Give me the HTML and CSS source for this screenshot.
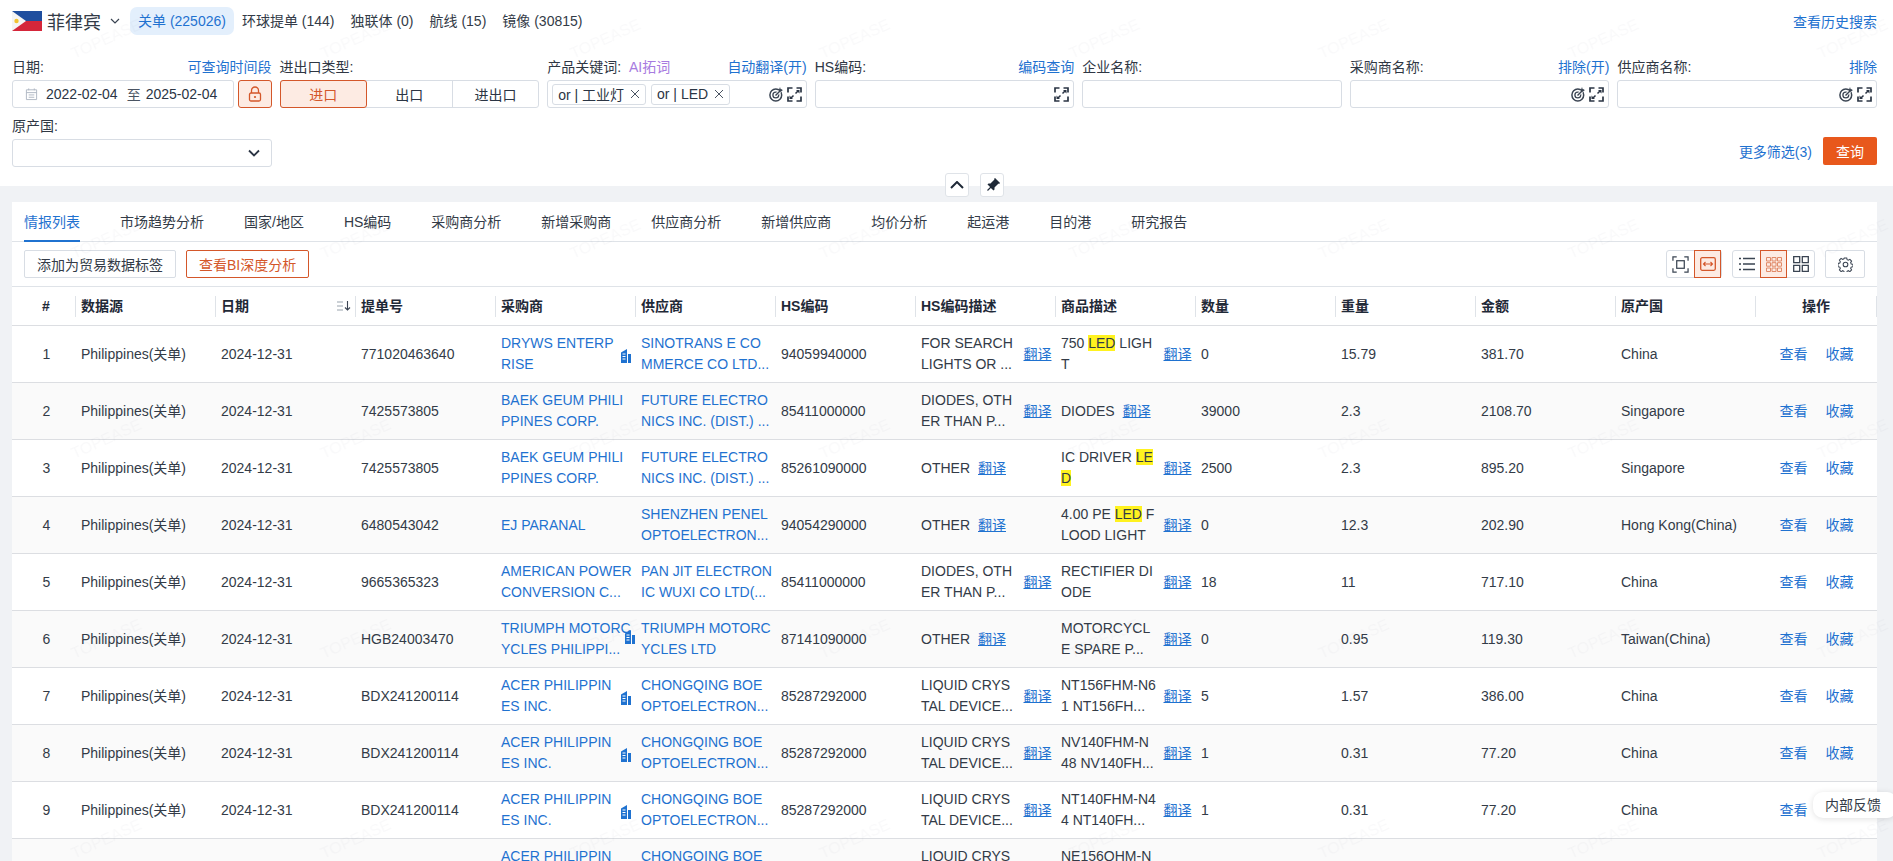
FILE: index.html
```html
<!DOCTYPE html>
<html lang="zh-CN">
<head>
<meta charset="utf-8">
<title>情报列表</title>
<link rel="stylesheet" href="styles.css">
</head>
<body>
<svg width="0" height="0" class="defs">
  <symbol id="i-expand" viewBox="0 0 15 15"><path d="M1 5.500V1h4.500M9.500 1H14v4.500M14 9.500V14H9.500M5.500 14H1V9.500" fill="none" stroke="#2b3544" stroke-width="1.700"/><path d="M8.500 6.500L11.500 3.500M6.500 8.500L3.500 11.500" stroke="#2b3544" stroke-width="1.500"/><path d="M9 3h3.500v3.500zM6 12H2.500V8.500z" fill="#2b3544"/></symbol>
  <symbol id="i-target" viewBox="0 0 15 15"><circle cx="6.800" cy="8" r="5.900" fill="none" stroke="#3a4452" stroke-width="1.500"/><circle cx="6.800" cy="8" r="2.900" fill="none" stroke="#3a4452" stroke-width="1.300"/><path d="M6.500 8.500L12.500 2.500" stroke="#fff" stroke-width="3"/><path d="M6.500 8.500L12.500 2.500" stroke="#3a4452" stroke-width="1.400"/><path d="M11 0l.7 2.300 2.300.7-2.300 1.700-2.200-.7z" fill="#3a4452"/></symbol>
  <symbol id="i-building" viewBox="0 0 10 14"><path d="M0 3.500L6 0v14H0z" fill="#1f72d0"/><path d="M7 5h3v9H7z" fill="#1f72d0"/><path d="M1.500 5h3M1.500 7.500h3M1.500 10h3" stroke="#fff" stroke-width="1"/></symbol>
  <symbol id="i-close" viewBox="0 0 10 10"><path d="M1 1l8 8M9 1l-8 8" stroke="#4a5462" stroke-width="1"/></symbol>
</svg>

<div class="page">
  <section class="search">
    <div class="topbar">
      <svg class="flag" viewBox="0 0 30 20"><rect width="30" height="10" fill="#1f4e9e"/><rect y="10" width="30" height="10" fill="#d5263a"/><path d="M0 0l14 10L0 20z" fill="#f4f4f4"/><circle cx="4.500" cy="10" r="2.200" fill="#f2c230"/></svg>
      <span class="country">菲律宾</span>
      <svg class="caret" viewBox="0 0 10 6"><path d="M1 1l4 4 4-4" fill="none" stroke="#3a4452" stroke-width="1.200"/></svg>
      <nav class="sources">
        <a class="source is-on">关单 (225026)</a>
        <a class="source">环球提单 (144)</a>
        <a class="source">独联体 (0)</a>
        <a class="source">航线 (15)</a>
        <a class="source">镜像 (30815)</a>
      </nav>
      <a class="link history">查看历史搜索</a>
    </div>

    <div class="filters">
      <div class="field">
        <div class="label"><span>日期:</span><a class="link">可查询时间段</a></div>
        <div class="date-row">
          <div class="box date">
            <svg class="cal" viewBox="0 0 14 14"><path d="M1.500 2.500h11v10.500h-11zM1.500 5.500h11M4 1v2M10 1v2M4 8h6M4 10.500h6" fill="none" stroke="#aeb6c1" stroke-width="1"/></svg>
            <span>2022-02-04</span><span class="to">至</span><span>2025-02-04</span>
          </div>
          <button class="lock"><svg viewBox="0 0 14 16" width="14" height="16"><path d="M3.500 7V4.500a3.500 3.500 0 0 1 7 0V7" fill="none" stroke="#d4572a" stroke-width="1.300"/><rect x="1.500" y="7" width="11" height="8" rx="1.500" fill="none" stroke="#d4572a" stroke-width="1.300"/><circle cx="7" cy="11" r="1.100" fill="#d4572a"/></svg></button>
        </div>
      </div>
      <div class="field">
        <div class="label"><span>进出口类型:</span></div>
        <div class="seg">
          <span class="seg-item is-on">进口</span><span class="seg-item">出口</span><span class="seg-item">进出口</span>
        </div>
      </div>
      <div class="field">
        <div class="label"><span>产品关键词: <a class="ai">AI拓词</a></span><a class="link">自动翻译(开)</a></div>
        <div class="box tags">
          <span class="tag">or | 工业灯<svg class="x"><use href="#i-close"/></svg></span>
          <span class="tag">or | LED<svg class="x"><use href="#i-close"/></svg></span>
          <span class="tools"><svg class="ico"><use href="#i-target"/></svg><svg class="ico"><use href="#i-expand"/></svg></span>
        </div>
      </div>
      <div class="field">
        <div class="label"><span>HS编码:</span><a class="link">编码查询</a></div>
        <div class="box"><span class="tools"><svg class="ico"><use href="#i-expand"/></svg></span></div>
      </div>
      <div class="field">
        <div class="label"><span>企业名称:</span></div>
        <div class="box"></div>
      </div>
      <div class="field">
        <div class="label"><span>采购商名称:</span><a class="link">排除(开)</a></div>
        <div class="box"><span class="tools"><svg class="ico"><use href="#i-target"/></svg><svg class="ico"><use href="#i-expand"/></svg></span></div>
      </div>
      <div class="field">
        <div class="label"><span>供应商名称:</span><a class="link">排除</a></div>
        <div class="box"><span class="tools"><svg class="ico"><use href="#i-target"/></svg><svg class="ico"><use href="#i-expand"/></svg></span></div>
      </div>
      <div class="field">
        <div class="label"><span>原产国:</span></div>
        <div class="box"><span class="tools"><svg class="chev" viewBox="0 0 12 8"><path d="M1 1.500l5 5 5-5" fill="none" stroke="#2b3544" stroke-width="1.800"/></svg></span></div>
      </div>
      <div class="actions">
        <a class="link">更多筛选(3)</a>
        <button class="query">查询</button>
      </div>
    </div>
  </section>

  <div class="float-btn float-up"><svg viewBox="0 0 14 8" width="14" height="8"><path d="M1 7l6-6 6 6" fill="none" stroke="#1f2937" stroke-width="2"/></svg></div>
  <div class="float-btn float-pin"><svg viewBox="0 0 24 24" width="17" height="17"><path transform="rotate(45 12 12)" d="M16 12V4h1V2H7v2h1v8l-2 2v2h5.200v6h1.600v-6H18v-2z" fill="#1f2937"/></svg></div>

  <main class="card">
    <nav class="tabs">
      <a class="tab is-on">情报列表</a><a class="tab">市场趋势分析</a><a class="tab">国家/地区</a><a class="tab">HS编码</a><a class="tab">采购商分析</a><a class="tab">新增采购商</a><a class="tab">供应商分析</a><a class="tab">新增供应商</a><a class="tab">均价分析</a><a class="tab">起运港</a><a class="tab">目的港</a><a class="tab">研究报告</a>
    </nav>
    <div class="toolbar">
      <button class="btn">添加为贸易数据标签</button>
      <button class="btn btn-accent">查看BI深度分析</button>
      <div class="views">
        <div class="group">
          <span class="vbtn"><svg viewBox="0 0 18 18" width="17" height="17"><path d="M1 5V1h4M13 1h4v4M17 13v4h-4M5 17H1v-4" fill="none" stroke="#3a4452" stroke-width="1.300"/><rect x="5" y="5" width="8" height="8" fill="none" stroke="#3a4452" stroke-width="1.300"/></svg></span>
          <span class="vbtn is-on"><svg viewBox="0 0 16 14" width="16" height="14"><rect x=".7" y=".7" width="14.600" height="12.600" rx="1.500" fill="none" stroke="#d4572a" stroke-width="1.300"/><path d="M3.500 7h9M5.500 5L3.500 7l2 2M10.500 5l2 2-2 2" fill="none" stroke="#d4572a" stroke-width="1.100"/></svg></span>
        </div>
        <div class="group">
          <span class="vbtn"><svg viewBox="0 0 16 14" width="16" height="14"><path d="M0 1.500h2M4 1.500h12M0 7h2M4 7h12M0 12.500h2M4 12.500h12" stroke="#3a4452" stroke-width="1.300"/></svg></span>
          <span class="vbtn is-on"><svg viewBox="0 0 16 15" width="16" height="15"><path d="M.5.5h4v3.500h-4zM6 .5h4v3.500H6zM11.500.5h4v3.500h-4zM.5 5.700h4v3.500h-4zM6 5.700h4v3.500H6zM11.500 5.700h4v3.500h-4zM.5 11h4v3.500h-4zM6 11h4v3.500H6zM11.500 11h4v3.500h-4z" fill="none" stroke="#e08a68" stroke-width="1"/></svg></span>
          <span class="vbtn"><svg viewBox="0 0 16 16" width="16" height="16"><path d="M.7.7h6v6h-6zM9.300.7h6v6h-6zM.7 9.300h6v6h-6zM9.300 9.300h6v6h-6z" fill="none" stroke="#3a4452" stroke-width="1.300"/></svg></span>
        </div>
        <span class="vbtn gear"><svg viewBox="0 0 16 16" width="15" height="15"><path d="M6.700 1h2.600l.4 1.900 1.300.6 1.700-1 1.800 1.900-1 1.600.6 1.400 1.900.4v2.500l-1.900.5-.6 1.300 1 1.700-1.800 1.800-1.700-1-1.300.6-.4 1.800H6.700l-.4-1.800-1.300-.6-1.700 1-1.800-1.800 1-1.700-.6-1.300-1.900-.5V6.800l1.900-.4.600-1.400-1-1.600 1.800-1.900 1.700 1 1.300-.6z" fill="none" stroke="#3a4452" stroke-width="1.100"/><circle cx="8" cy="8" r="2.500" fill="none" stroke="#3a4452" stroke-width="1.100"/></svg></span>
      </div>
    </div>

    <table class="grid">
      <colgroup>
        <col class="c-num"><col class="c-w"><col class="c-w"><col class="c-w"><col class="c-w"><col class="c-w"><col class="c-w"><col class="c-w"><col class="c-w"><col class="c-w"><col class="c-w"><col class="c-w"><col class="c-w"><col class="c-op">
      </colgroup>
      <thead>
        <tr>
          <th><div class="th th-num">#</div></th>
          <th><div class="th">数据源</div></th>
          <th><div class="th th-sort">日期<svg class="sort" viewBox="0 0 14 10" width="14" height="10"><path d="M0 1h6M0 5h6M0 9h6" stroke="#9aa3ae" stroke-width="1.200"/><path d="M10.500 0v9M8 6.500l2.500 2.500L13 6.500" fill="none" stroke="#3a4452" stroke-width="1.100"/></svg></div></th>
          <th><div class="th">提单号</div></th>
          <th><div class="th">采购商</div></th>
          <th><div class="th">供应商</div></th>
          <th><div class="th">HS编码</div></th>
          <th><div class="th">HS编码描述</div></th>
          <th><div class="th">商品描述</div></th>
          <th><div class="th">数量</div></th>
          <th><div class="th">重量</div></th>
          <th><div class="th">金额</div></th>
          <th><div class="th">原产国</div></th>
          <th><div class="th th-c">操作</div></th>
        </tr>
      </thead>
      <tbody>
        <tr>
          <td class="num">1</td><td>Philippines(关单)</td><td>2024-12-31</td><td>771020463640</td>
          <td><div class="co"><a class="co-t">DRYWS ENTERP<br>RISE</a><svg class="bld"><use href="#i-building"/></svg></div></td>
          <td><a class="cl">SINOTRANS E CO<br>MMERCE CO LTD...</a></td>
          <td>94059940000</td>
          <td><div class="tr"><span class="fix">FOR SEARCH<br>LIGHTS OR ...</span><a class="tl">翻译</a></div></td>
          <td><div class="tr"><span class="fix">750 <mark>LED</mark> LIGH<br>T</span><a class="tl">翻译</a></div></td>
          <td>0</td><td>15.79</td><td>381.70</td><td>China</td>
          <td class="ops"><a>查看</a><a>收藏</a></td>
        </tr>
        <tr>
          <td class="num">2</td><td>Philippines(关单)</td><td>2024-12-31</td><td>7425573805</td>
          <td><a class="cl">BAEK GEUM PHILI<br>PPINES CORP.</a></td>
          <td><a class="cl">FUTURE ELECTRO<br>NICS INC. (DIST.) ...</a></td>
          <td>85411000000</td>
          <td><div class="tr"><span class="fix">DIODES, OTH<br>ER THAN P...</span><a class="tl">翻译</a></div></td>
          <td><div class="tr"><span>DIODES</span><a class="tl">翻译</a></div></td>
          <td>39000</td><td>2.3</td><td>2108.70</td><td>Singapore</td>
          <td class="ops"><a>查看</a><a>收藏</a></td>
        </tr>
        <tr>
          <td class="num">3</td><td>Philippines(关单)</td><td>2024-12-31</td><td>7425573805</td>
          <td><a class="cl">BAEK GEUM PHILI<br>PPINES CORP.</a></td>
          <td><a class="cl">FUTURE ELECTRO<br>NICS INC. (DIST.) ...</a></td>
          <td>85261090000</td>
          <td><div class="tr"><span>OTHER</span><a class="tl">翻译</a></div></td>
          <td><div class="tr"><span class="fix">IC DRIVER <mark>LE<br>D</mark></span><a class="tl">翻译</a></div></td>
          <td>2500</td><td>2.3</td><td>895.20</td><td>Singapore</td>
          <td class="ops"><a>查看</a><a>收藏</a></td>
        </tr>
        <tr>
          <td class="num">4</td><td>Philippines(关单)</td><td>2024-12-31</td><td>6480543042</td>
          <td><a class="cl">EJ PARANAL</a></td>
          <td><a class="cl">SHENZHEN PENEL<br>OPTOELECTRON...</a></td>
          <td>94054290000</td>
          <td><div class="tr"><span>OTHER</span><a class="tl">翻译</a></div></td>
          <td><div class="tr"><span class="fix">4.00 PE <mark>LED</mark> F<br>LOOD LIGHT</span><a class="tl">翻译</a></div></td>
          <td>0</td><td>12.3</td><td>202.90</td><td>Hong Kong(China)</td>
          <td class="ops"><a>查看</a><a>收藏</a></td>
        </tr>
        <tr>
          <td class="num">5</td><td>Philippines(关单)</td><td>2024-12-31</td><td>9665365323</td>
          <td><a class="cl">AMERICAN POWER<br>CONVERSION C...</a></td>
          <td><a class="cl">PAN JIT ELECTRON<br>IC WUXI CO LTD(...</a></td>
          <td>85411000000</td>
          <td><div class="tr"><span class="fix">DIODES, OTH<br>ER THAN P...</span><a class="tl">翻译</a></div></td>
          <td><div class="tr"><span class="fix">RECTIFIER DI<br>ODE</span><a class="tl">翻译</a></div></td>
          <td>18</td><td>11</td><td>717.10</td><td>China</td>
          <td class="ops"><a>查看</a><a>收藏</a></td>
        </tr>
        <tr>
          <td class="num">6</td><td>Philippines(关单)</td><td>2024-12-31</td><td>HGB24003470</td>
          <td><div class="co co-wide"><a class="co-t">TRIUMPH MOTORC<br>YCLES PHILIPPI...</a><svg class="bld"><use href="#i-building"/></svg></div></td>
          <td><a class="cl">TRIUMPH MOTORC<br>YCLES LTD</a></td>
          <td>87141090000</td>
          <td><div class="tr"><span>OTHER</span><a class="tl">翻译</a></div></td>
          <td><div class="tr"><span class="fix">MOTORCYCL<br>E SPARE P...</span><a class="tl">翻译</a></div></td>
          <td>0</td><td>0.95</td><td>119.30</td><td>Taiwan(China)</td>
          <td class="ops"><a>查看</a><a>收藏</a></td>
        </tr>
        <tr>
          <td class="num">7</td><td>Philippines(关单)</td><td>2024-12-31</td><td>BDX241200114</td>
          <td><div class="co"><a class="co-t">ACER PHILIPPIN<br>ES INC.</a><svg class="bld"><use href="#i-building"/></svg></div></td>
          <td><a class="cl">CHONGQING BOE<br>OPTOELECTRON...</a></td>
          <td>85287292000</td>
          <td><div class="tr"><span class="fix">LIQUID CRYS<br>TAL DEVICE...</span><a class="tl">翻译</a></div></td>
          <td><div class="tr"><span class="fix">NT156FHM-N6<br>1 NT156FH...</span><a class="tl">翻译</a></div></td>
          <td>5</td><td>1.57</td><td>386.00</td><td>China</td>
          <td class="ops"><a>查看</a><a>收藏</a></td>
        </tr>
        <tr>
          <td class="num">8</td><td>Philippines(关单)</td><td>2024-12-31</td><td>BDX241200114</td>
          <td><div class="co"><a class="co-t">ACER PHILIPPIN<br>ES INC.</a><svg class="bld"><use href="#i-building"/></svg></div></td>
          <td><a class="cl">CHONGQING BOE<br>OPTOELECTRON...</a></td>
          <td>85287292000</td>
          <td><div class="tr"><span class="fix">LIQUID CRYS<br>TAL DEVICE...</span><a class="tl">翻译</a></div></td>
          <td><div class="tr"><span class="fix">NV140FHM-N<br>48 NV140FH...</span><a class="tl">翻译</a></div></td>
          <td>1</td><td>0.31</td><td>77.20</td><td>China</td>
          <td class="ops"><a>查看</a><a>收藏</a></td>
        </tr>
        <tr>
          <td class="num">9</td><td>Philippines(关单)</td><td>2024-12-31</td><td>BDX241200114</td>
          <td><div class="co"><a class="co-t">ACER PHILIPPIN<br>ES INC.</a><svg class="bld"><use href="#i-building"/></svg></div></td>
          <td><a class="cl">CHONGQING BOE<br>OPTOELECTRON...</a></td>
          <td>85287292000</td>
          <td><div class="tr"><span class="fix">LIQUID CRYS<br>TAL DEVICE...</span><a class="tl">翻译</a></div></td>
          <td><div class="tr"><span class="fix">NT140FHM-N4<br>4 NT140FH...</span><a class="tl">翻译</a></div></td>
          <td>1</td><td>0.31</td><td>77.20</td><td>China</td>
          <td class="ops"><a>查看</a><a>收藏</a></td>
        </tr>
        <tr>
          <td class="num"></td><td></td><td></td><td></td>
          <td><a class="cl">ACER PHILIPPIN<br>ES INC.</a></td>
          <td><a class="cl">CHONGQING BOE<br>OPTOELECTRON...</a></td>
          <td></td>
          <td><div class="tr"><span class="fix">LIQUID CRYS<br>TAL DEVICE...</span></div></td>
          <td><div class="tr"><span class="fix">NE156QHM-N<br>1 NE156QH...</span></div></td>
          <td></td><td></td><td></td><td></td>
          <td class="ops"></td>
        </tr>
      </tbody>
    </table>
  </main>

  <div class="feedback">内部反馈</div>

  <svg class="watermark" aria-hidden="true">
    <defs>
      <pattern id="wm" width="249.500" height="200" patternUnits="userSpaceOnUse">
        <text x="74" y="59" transform="rotate(-24 74 59)">TOPEASE</text>
      </pattern>
    </defs>
    <rect width="100%" height="100%" fill="url(#wm)"/>
  </svg>
</div>
</body>
</html>
```

FILE: styles.css
```css
* { box-sizing: border-box; }
html, body { margin: 0; height: 100%; overflow: hidden; }
body {
  font-family: "Liberation Sans", "Noto Sans CJK SC", sans-serif;
  font-size: 14px;
  color: #333b47;
  background: #f0f2f5;
}
a { color: inherit; text-decoration: none; }
button { font: inherit; cursor: pointer; }
.defs { position: absolute; }
.page { position: relative; height: 861px; overflow: hidden; }
.link { color: #1f72d0; }

/* search panel */
.search { background: #fff; height: 186px; padding: 7px 16px 0 12px; }
.topbar { display: flex; align-items: center; height: 28px; }
.flag { width: 30px; height: 20px; flex: none; }
.country { font-size: 18px; margin-left: 5px; color: #333b47; }
.caret { width: 10px; height: 6px; margin: 0 10px 0 9px; flex: none; }
.sources { display: flex; align-items: center; }
.source { height: 28px; line-height: 28px; padding: 0 8px; white-space: nowrap; }
.source.is-on { background: #e3effc; color: #1f72d0; border-radius: 7px; }
.history { margin-left: auto; }

.filters {
  display: grid;
  grid-template-columns: repeat(7, 1fr);
  column-gap: 8px;
  row-gap: 9px;
  margin-top: 23px;
}
.field { min-width: 0; }
.label { display: flex; justify-content: space-between; height: 18px; line-height: 18px; margin-bottom: 4px; white-space: nowrap; color: #2f3744; }
.ai { color: #a77be0; margin-left: 4px; }
.box {
  display: flex; align-items: center;
  height: 28px; border: 1px solid #d8dde4; border-radius: 3px;
  background: #fff; padding: 0 4px;
}
.date-row { display: flex; gap: 4px; }
.date { flex: 1; padding-left: 12px; color: #2b3544; white-space: nowrap; }
.cal { width: 13px; height: 14px; margin-right: 8px; flex: none; }
.to { color: #4a5462; margin: 0 5px 0 9px; }
.lock {
  width: 34px; height: 28px; padding: 0; flex: none;
  display: flex; align-items: center; justify-content: center;
  background: #fdebe3; border: 1px solid #d4572a; border-radius: 3px;
}
.seg { display: flex; height: 28px; border: 1px solid #d8dde4; border-radius: 3px; }
.seg-item { flex: 1; display: flex; align-items: center; justify-content: center; color: #2b3544; }
.seg-item + .seg-item + .seg-item { border-left: 1px solid #d8dde4; }
.seg-item.is-on { background: #fdebe3; color: #d4572a; margin: -1px 0 -1px -1px; border: 1px solid #d4572a; border-radius: 3px; }
.tags { gap: 5px; }
.tag {
  display: inline-flex; align-items: center; height: 21px; padding: 0 5px;
  border: 1px solid #d8dde4; border-radius: 3px; white-space: nowrap; color: #2b3544;
}
.x { width: 10px; height: 10px; margin-left: 6px; flex: none; }
.tools { margin-left: auto; display: flex; align-items: center; gap: 3px; }
.ico { width: 15px; height: 15px; display: block; }
.chev { width: 12px; height: 8px; margin-right: 7px; display: block; }
.actions { grid-column: 2 / -1; display: flex; justify-content: flex-end; align-items: center; gap: 11px; align-self: end; margin-bottom: 2px; }
.query { width: 54px; height: 28px; background: #e8581c; color: #fff; border: 0; border-radius: 2px; padding: 0; }

.float-btn {
  position: absolute; top: 173px; width: 24px; height: 24px;
  display: flex; align-items: center; justify-content: center;
  background: #fff; border: 1px solid #dfe3e8; border-radius: 3px;
}
.float-up { left: 945px; }
.float-pin { left: 980px; }

/* result card */
.card { background: #fff; margin: 16px 16px 0 12px; height: 700px; }
.tabs { display: flex; gap: 40px; height: 40px; padding: 0 12px; border-bottom: 1px solid #dfe3e8; }
.tab { height: 40px; line-height: 40px; color: #333b47; white-space: nowrap; }
.tab.is-on { color: #1f72d0; border-bottom: 2px solid #1f72d0; }
.toolbar { display: flex; align-items: center; gap: 10px; height: 45px; padding: 0 12px; border-bottom: 1px solid #dfe3e8; }
.btn {
  height: 28px; padding: 0 12px; background: #fff; color: #333b47;
  border: 1px solid #d8dde4; border-radius: 2px; white-space: nowrap;
}
.btn-accent { color: #d4572a; border-color: #d4572a; }
.views { margin-left: auto; display: flex; gap: 10px; }
.group { display: flex; border: 1px solid #d8dde4; border-radius: 3px; height: 28px; }
.vbtn { width: 27px; display: flex; align-items: center; justify-content: center; }
.vbtn.is-on { background: #fdebe3; outline: 1px solid #d4572a; outline-offset: -1px; margin: -1px 0; }
.gear { width: 40px; height: 28px; border: 1px solid #d8dde4; border-radius: 2px; }

.grid { width: 1865px; border-collapse: separate; border-spacing: 0; table-layout: fixed; }
.c-num { width: 64px; }
.c-w { width: 140px; }
.c-op { width: 121px; }
th { height: 39px; padding: 0; text-align: left; border-bottom: 1px solid #dcdee2; }
.th {
  height: 21px; line-height: 21px; padding-left: 5px;
  border-right: 1px solid #dfe3e8; color: #1f2937; font-weight: 700;
}
.th-c { text-align: center; padding-left: 0; }
.th-num { text-align: center; padding-left: 5px; }
.th-sort { display: flex; justify-content: space-between; align-items: center; padding-right: 4px; }
td {
  height: 57px; padding: 0 0 0 5px; border-bottom: 1px solid #dcdee2;
  line-height: 21px; color: #333b47; white-space: nowrap; overflow: hidden;
}
tbody tr:nth-child(even) td { background: #fafafa; }
.num { text-align: center; }
.cl { display: block; color: #1f72d0; }
.co { display: flex; align-items: center; }
.co-t { width: 119px; flex: none; color: #1f72d0; }
.co-wide .co-t { width: 123px; }
.bld { width: 10px; height: 14px; margin-left: 1px; flex: none; margin-top: 3px; }
.co-wide .bld { margin-top: -4px; }
.tr { display: flex; align-items: center; gap: 8px; }
.fix { width: 94.500px; flex: none; }
.tl { color: #1f72d0; text-decoration: underline; flex: none; }
mark { background: #fff21f; color: inherit; }
.ops { padding: 0; text-align: center; color: #1f72d0; }
.ops a { margin: 0 9px; }

.feedback {
  position: absolute; left: 1813px; top: 792px; width: 84px; height: 26px;
  line-height: 26px; padding-left: 12px; background: #fff; border-radius: 10px;
  box-shadow: 0 1px 6px rgba(0, 0, 0, .12); color: #333b47;
}
.watermark { position: absolute; inset: 0; width: 100%; height: 100%; pointer-events: none; }
.watermark text { font: 16px "Liberation Sans", sans-serif; fill: rgba(60, 70, 90, .03); }
```
